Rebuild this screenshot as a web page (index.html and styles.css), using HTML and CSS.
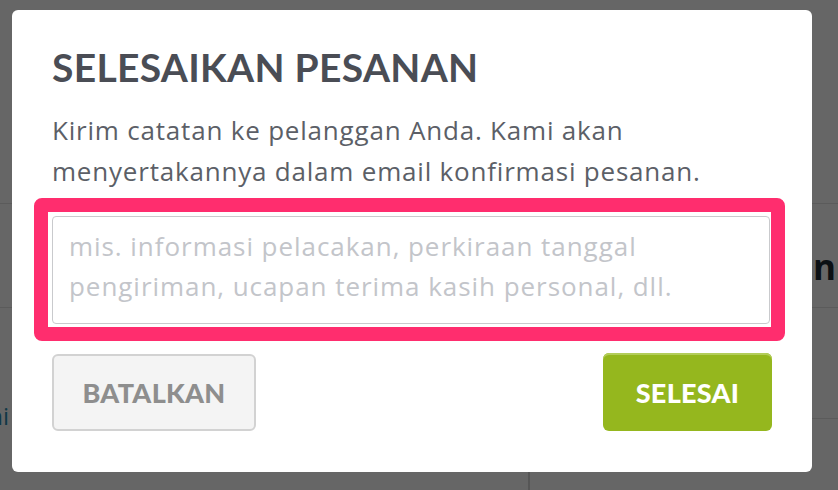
FILE: index.html
```html
<!DOCTYPE html>
<html lang="id">
<head>
<meta charset="utf-8">
<title>Selesaikan Pesanan</title>
<link rel="stylesheet" href="styles.css">
</head>
<body>
<div class="page">
  <div class="page-top"></div>
  <div class="page-row">
    <div class="page-heading">Catatan</div>
  </div>
  <div class="page-bottom">
    <div class="page-left"><span class="page-link">ini</span></div>
    <div class="page-main"></div>
    <div class="page-side"><div class="side-row"></div></div>
  </div>
</div>
<div class="overlay">
  <div class="modal">
    <h1 class="modal-title">SELESAIKAN PESANAN</h1>
    <p class="modal-text">Kirim catatan ke pelanggan Anda. Kami akan<br>menyertakannya dalam email konfirmasi pesanan.</p>
    <div class="highlight">
      <div class="note-field" role="textbox"><span class="placeholder">mis. informasi pelacakan, perkiraan tanggal<br>pengiriman, ucapan terima kasih personal, dll.</span></div>
    </div>
    <div class="actions">
      <button class="btn btn-cancel">BATALKAN</button>
      <button class="btn btn-done">SELESAI</button>
    </div>
  </div>
</div>
</body>
</html>
```
FILE: styles.css
```css
* { box-sizing: border-box; }
html, body { margin: 0; padding: 0; }
body {
  width: 838px;
  height: 490px;
  overflow: hidden;
  background: #fff;
  font-family: "Open Sans", "Liberation Sans", sans-serif;
}

/* background page (dimmed by overlay) */
.page { width: 838px; height: 490px; }
.page-top { height: 204px; border-bottom: 1px solid #e4e4e4; }
.page-row {
  height: 104px;
  border-bottom: 1px solid #e4e4e4;
  padding: 43px 2px 0 0;
}
.page-heading {
  text-align: right;
  font-family: "Open Sans", sans-serif;
  font-weight: 700;
  font-size: 35px;
  line-height: 40px;
  color: #1d2933;
}
.page-bottom {
  display: grid;
  grid-template-columns: 9px 1fr 310px;
  height: 182px;
}
.page-left {
  display: flex;
  justify-content: flex-end;
  padding-top: 93px;
}
.page-link {
  white-space: nowrap;
  font-size: 24px;
  line-height: 30px;
  color: #2a8db0;
}
.page-side { border-left: 2px solid #d8d8d8; }
.side-row { height: 111px; border-bottom: 1px solid #e4e4e4; }

/* overlay + modal */
.overlay {
  position: fixed;
  inset: 0;
  background: rgba(0, 0, 0, 0.6);
  padding: 10px 0 0 12px;
}
.modal {
  width: 800px;
  height: 462px;
  background: #fff;
  border-radius: 6px;
  padding: 34px 40px 0 40px;
}
.modal-title {
  margin: 0;
  font-family: Lato, "Liberation Sans", sans-serif;
  font-weight: 700;
  font-size: 39px;
  line-height: 47px;
  letter-spacing: 0.3px;
  color: #4a4d55;
}
.modal-text {
  margin: 19px 0 0 0;
  font-size: 26px;
  line-height: 41px;
  letter-spacing: 0.8px;
  color: #5c5f67;
}
.highlight {
  margin: 6px -13px 0 -18px;
  border: 14px solid #ff2d6e;
  border-radius: 8px;
  padding: 4px 1px 3px 4px;
}
.note-field {
  height: 108px;
  border: 1px solid #c9cacd;
  border-radius: 4px;
  padding: 9px 16px;
  background: #fff;
}
.placeholder {
  font-size: 26px;
  line-height: 40px;
  letter-spacing: 0.95px;
  color: #c3c5ca;
}
.actions {
  display: flex;
  justify-content: space-between;
  align-items: flex-start;
  margin-top: 12px;
}
.btn {
  font-family: Lato, "Liberation Sans", sans-serif;
  font-weight: 900;
  font-size: 27px;
  letter-spacing: 0.3px;
  border-radius: 6px;
  cursor: pointer;
}
.btn-cancel {
  margin-top: 1px;
  width: 204px;
  height: 77px;
  background: #f4f4f4;
  border: 2px solid #d2d2d2;
  color: #8e8e8e;
}
.btn-done {
  width: 169px;
  height: 78px;
  background: #95b71e;
  border: none;
  color: #fff;
  box-shadow: inset 0 2px 0 0 #b3cd5a;
}
```
